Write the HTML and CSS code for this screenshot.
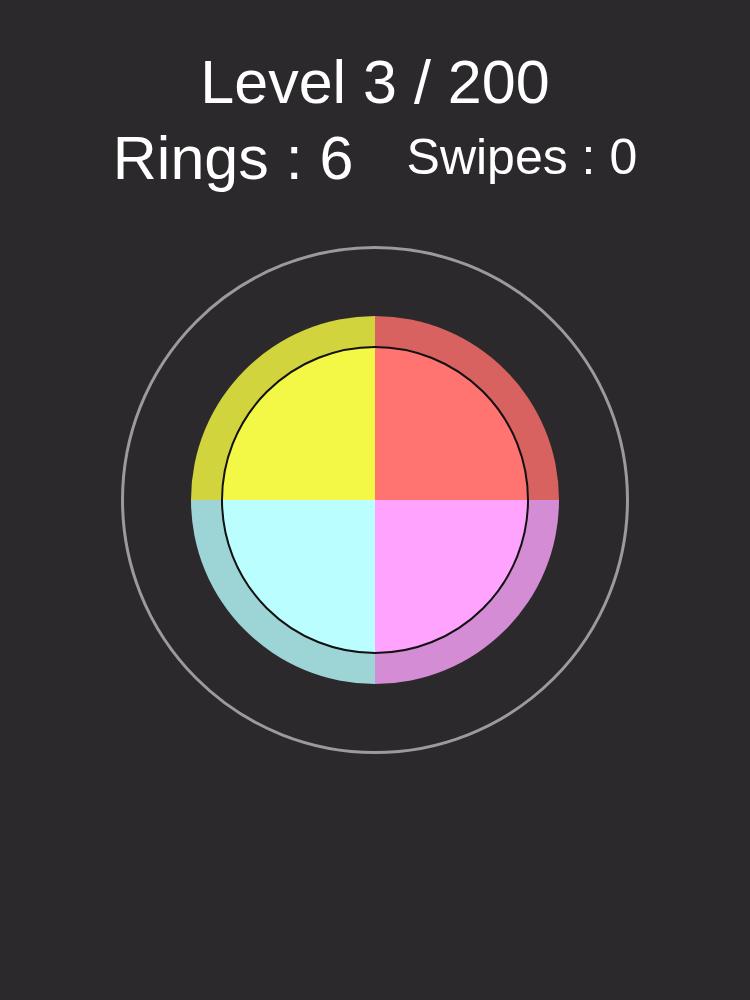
FILE: index.html
```html
<!DOCTYPE html>
<html lang="en">
<head>
    <meta charset="UTF-8">
    <meta name="viewport" content="width=device-width, initial-scale=1.0">
    <title>Rings</title>
    <link rel="stylesheet" href="styles.css">
</head>
<body>
    <div class="hud">
        <div class="level">Level 3 / 200</div>
        <div class="stats">
            <span class="rings">Rings : 6</span>
            <span class="swipes">Swipes : 0</span>
        </div>
    </div>

    <div class="board">
        <svg class="ring" width="520" height="520" viewBox="0 0 520 520">
            <!-- 外圈 -->
            <circle cx="260" cy="260" r="252.5" fill="none" stroke="#9b9b9b" stroke-width="3"/>
            <!-- 外层色块 -->
            <path d="M260 260 H76 A184 184 0 0 1 260 76 Z" fill="#d2d43e"/>
            <path d="M260 260 V76 A184 184 0 0 1 444 260 Z" fill="#d8625f"/>
            <path d="M260 260 H444 A184 184 0 0 1 260 444 Z" fill="#d48dd5"/>
            <path d="M260 260 V444 A184 184 0 0 1 76 260 Z" fill="#9dd5d6"/>
            <!-- 内层色块 -->
            <path d="M260 260 H107 A153 153 0 0 1 260 107 Z" fill="#f3f746"/>
            <path d="M260 260 V107 A153 153 0 0 1 413 260 Z" fill="#ff7470"/>
            <path d="M260 260 H413 A153 153 0 0 1 260 413 Z" fill="#ffa3ff"/>
            <path d="M260 260 V413 A153 153 0 0 1 107 260 Z" fill="#bafeff"/>
            <circle cx="260" cy="260" r="153" fill="none" stroke="#111" stroke-width="2"/>
        </svg>
    </div>
</body>
</html>
```

FILE: styles.css
```css
*{padding: 0;margin: 0;}
html,body{
    width: 100%;
    height: 100%;
}
body{
    background-color: #2b292b;
    color: #fff;
    font-family: "Liberation Sans", Arial, sans-serif;
    overflow: hidden;
}
.hud{
    padding-top: 52px;
    text-align: center;
}
.level{
    font-size: 61px;
    line-height: 61px;
}
.stats{
    display: flex;
    justify-content: center;
    align-items: flex-end;
    gap: 53px;
    margin-top: 15px;
}
.rings{
    font-size: 61px;
    line-height: 61px;
}
.swipes{
    font-size: 50px;
    line-height: 50px;
    margin-bottom: 7px;
}
.board{
    display: flex;
    justify-content: center;
    margin-top: 51px;
}
.ring{
    display: block;
}
```
